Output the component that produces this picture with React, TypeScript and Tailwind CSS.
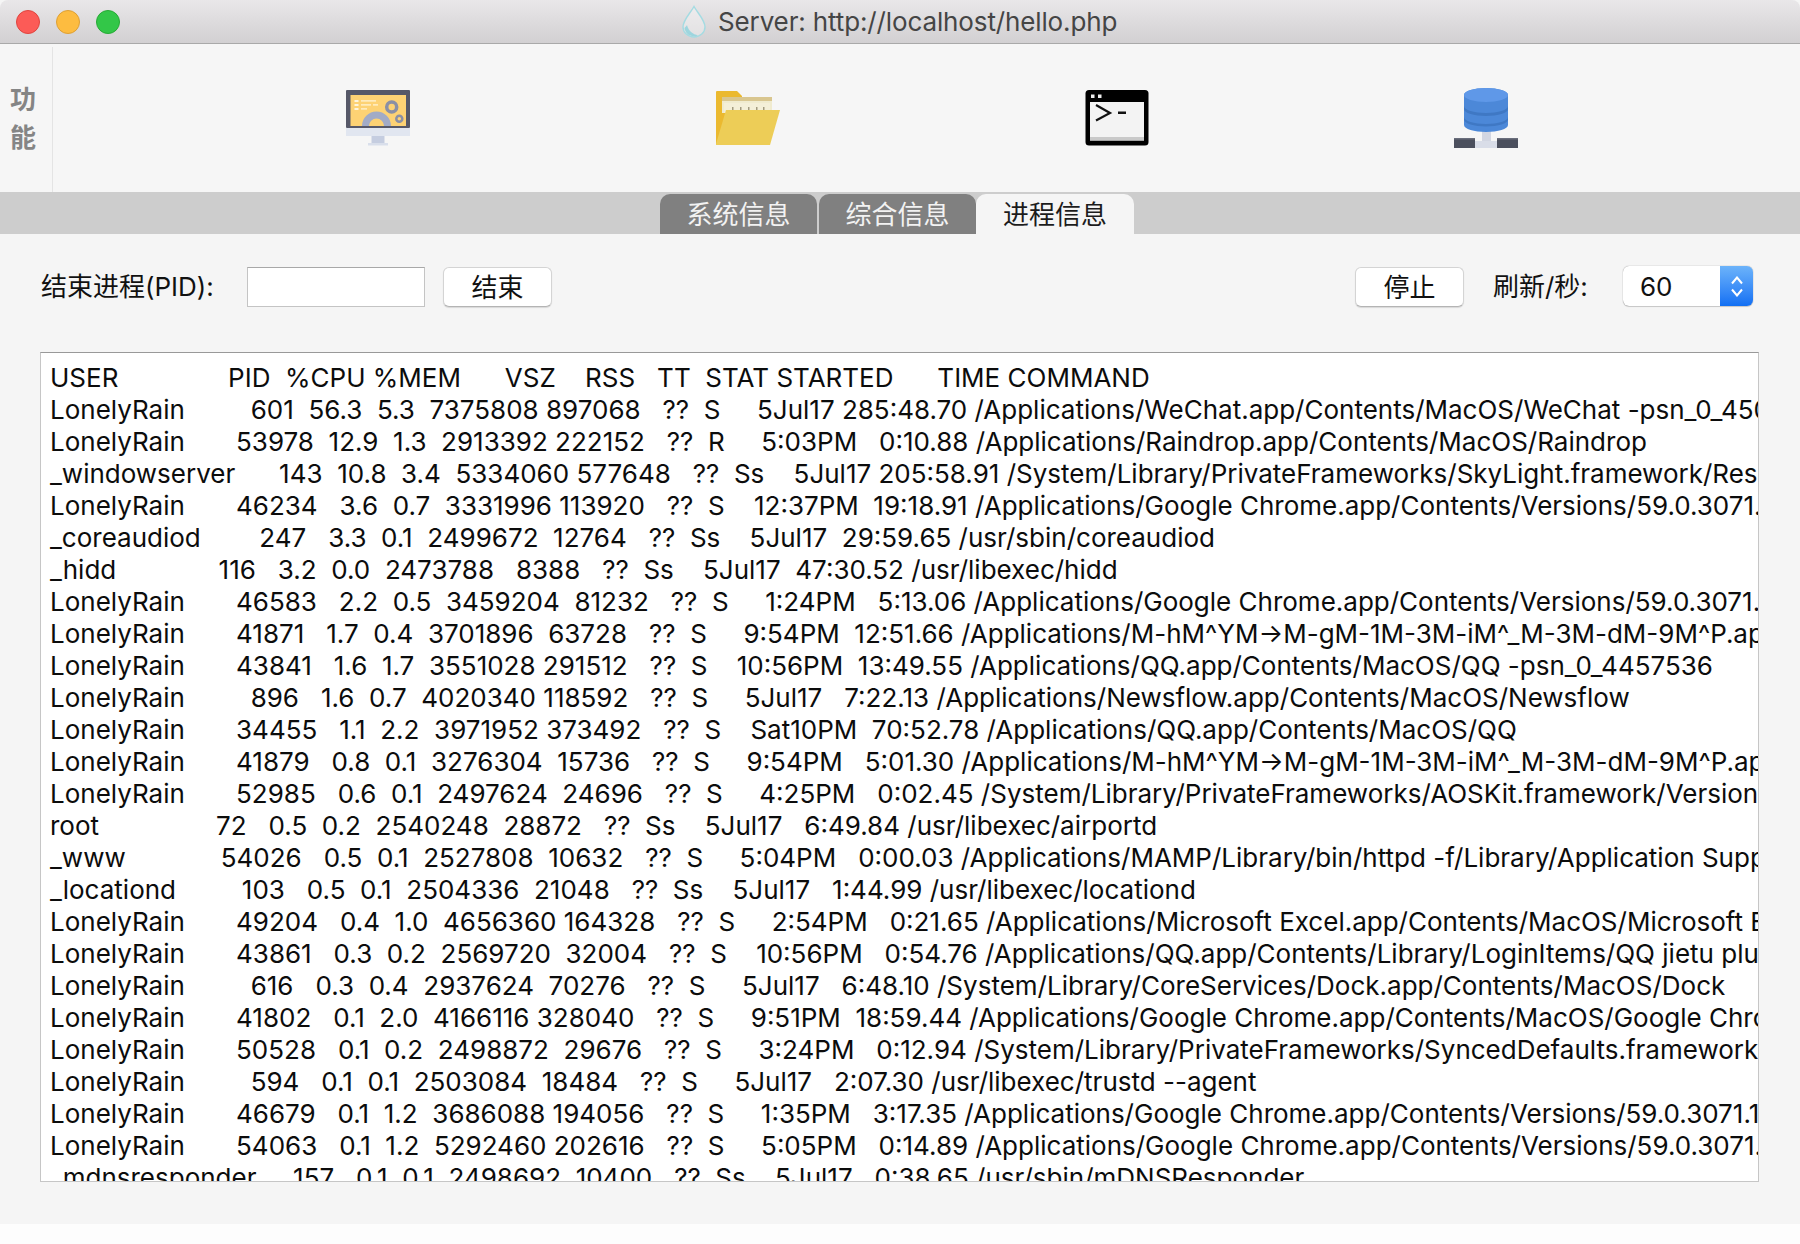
import React from 'react';

const chrome = '/Applications/Google Chrome.app/Contents/Versions/59.0.3071.115/Google Chrome Helper.app/Contents/MacOS/Google Chrome Helper --type=renderer';
const raindrop = '/Applications/M-hM^YM->M-gM-1M-3M-iM^_M-3M-dM-9M^P.app/Contents/MacOS/helper';

const procs = [
  ['LonelyRain', '601', '56.3', '5.3', '7375808', '897068', 'S', '5Jul17', '285:48.70', '/Applications/WeChat.app/Contents/MacOS/WeChat -psn_0_4501120'],
  ['LonelyRain', '53978', '12.9', '1.3', '2913392', '222152', 'R', '5:03PM', '0:10.88', '/Applications/Raindrop.app/Contents/MacOS/Raindrop'],
  ['_windowserver', '143', '10.8', '3.4', '5334060', '577648', 'Ss', '5Jul17', '205:58.91', '/System/Library/PrivateFrameworks/SkyLight.framework/Resources/WindowServer -daemon'],
  ['LonelyRain', '46234', '3.6', '0.7', '3331996', '113920', 'S', '12:37PM', '19:18.91', chrome],
  ['_coreaudiod', '247', '3.3', '0.1', '2499672', '12764', 'Ss', '5Jul17', '29:59.65', '/usr/sbin/coreaudiod'],
  ['_hidd', '116', '3.2', '0.0', '2473788', '8388', 'Ss', '5Jul17', '47:30.52', '/usr/libexec/hidd'],
  ['LonelyRain', '46583', '2.2', '0.5', '3459204', '81232', 'S', '1:24PM', '5:13.06', chrome],
  ['LonelyRain', '41871', '1.7', '0.4', '3701896', '63728', 'S', '9:54PM', '12:51.66', raindrop],
  ['LonelyRain', '43841', '1.6', '1.7', '3551028', '291512', 'S', '10:56PM', '13:49.55', '/Applications/QQ.app/Contents/MacOS/QQ -psn_0_4457536'],
  ['LonelyRain', '896', '1.6', '0.7', '4020340', '118592', 'S', '5Jul17', '7:22.13', '/Applications/Newsflow.app/Contents/MacOS/Newsflow'],
  ['LonelyRain', '34455', '1.1', '2.2', '3971952', '373492', 'S', 'Sat10PM', '70:52.78', '/Applications/QQ.app/Contents/MacOS/QQ'],
  ['LonelyRain', '41879', '0.8', '0.1', '3276304', '15736', 'S', '9:54PM', '5:01.30', raindrop],
  ['LonelyRain', '52985', '0.6', '0.1', '2497624', '24696', 'S', '4:25PM', '0:02.45', '/System/Library/PrivateFrameworks/AOSKit.framework/Versions/A/Helpers/AOSHeartbeat'],
  ['root', '72', '0.5', '0.2', '2540248', '28872', 'Ss', '5Jul17', '6:49.84', '/usr/libexec/airportd'],
  ['_www', '54026', '0.5', '0.1', '2527808', '10632', 'S', '5:04PM', '0:00.03', '/Applications/MAMP/Library/bin/httpd -f/Library/Application Support/appsolute/MAMP'],
  ['_locationd', '103', '0.5', '0.1', '2504336', '21048', 'Ss', '5Jul17', '1:44.99', '/usr/libexec/locationd'],
  ['LonelyRain', '49204', '0.4', '1.0', '4656360', '164328', 'S', '2:54PM', '0:21.65', '/Applications/Microsoft Excel.app/Contents/MacOS/Microsoft Excel'],
  ['LonelyRain', '43861', '0.3', '0.2', '2569720', '32004', 'S', '10:56PM', '0:54.76', '/Applications/QQ.app/Contents/Library/LoginItems/QQ jietu plugin.app'],
  ['LonelyRain', '616', '0.3', '0.4', '2937624', '70276', 'S', '5Jul17', '6:48.10', '/System/Library/CoreServices/Dock.app/Contents/MacOS/Dock'],
  ['LonelyRain', '41802', '0.1', '2.0', '4166116', '328040', 'S', '9:51PM', '18:59.44', '/Applications/Google Chrome.app/Contents/MacOS/Google Chrome'],
  ['LonelyRain', '50528', '0.1', '0.2', '2498872', '29676', 'S', '3:24PM', '0:12.94', '/System/Library/PrivateFrameworks/SyncedDefaults.framework/Support/syncdefaultsd'],
  ['LonelyRain', '594', '0.1', '0.1', '2503084', '18484', 'S', '5Jul17', '2:07.30', '/usr/libexec/trustd --agent'],
  ['LonelyRain', '46679', '0.1', '1.2', '3686088', '194056', 'S', '1:35PM', '3:17.35', chrome],
  ['LonelyRain', '54063', '0.1', '1.2', '5292460', '202616', 'S', '5:05PM', '0:14.89', chrome],
  ['_mdnsresponder', '157', '0.1', '0.1', '2498692', '10400', 'Ss', '5Jul17', '0:38.65', '/usr/sbin/mDNSResponder'],
];

// same column widths as `ps aux`
const psLine = (p: string[]) =>
  `${p[0].padEnd(16)} ${p[1].padStart(5)}  ${p[2].padStart(4)} ${p[3].padStart(4)} ${p[4].padStart(8)} ${p[5].padStart(6)}   ??  ${p[6].padEnd(4)} ${p[7].padStart(7)} ${p[8].padStart(9)} ${p[9]}`;

const header = 'USER               PID  %CPU %MEM      VSZ    RSS   TT  STAT STARTED      TIME COMMAND';

const MonitorIcon = () => (
  <svg width="64" height="56" viewBox="0 0 64 56">
    <rect x="0" y="0" width="64" height="38" rx="1" fill="#565868" />
    <rect x="0" y="38" width="64" height="8" fill="#e1e6f0" />
    <rect x="25.5" y="46" width="13" height="7" fill="#c5cde0" />
    <rect x="22" y="53" width="20" height="2.5" fill="#d9dfeb" />
    <rect x="4.5" y="5" width="55.5" height="31" fill="#fdd274" />
    <path d="M16 36a14.5 14.5 0 0 1 29 0h-7a7.5 7.5 0 0 0-15 0z" fill="#a2abc6" />
    <circle cx="45.7" cy="17" r="5" fill="none" stroke="#8a8fa5" strokeWidth="3.5" />
    <circle cx="53.3" cy="28.7" r="3" fill="none" stroke="#8a8fa5" strokeWidth="2.5" />
    <g fill="#fff5dc">
      <rect x="8.5" y="10" width="4" height="2" />
      <rect x="15" y="10.3" width="15" height="1.2" />
      <rect x="8.5" y="14" width="4" height="2" />
      <rect x="15" y="14.3" width="10" height="1.2" />
      <rect x="27" y="14.3" width="5" height="1.2" />
      <rect x="8.5" y="18" width="4" height="2" />
      <rect x="15" y="18.3" width="6" height="1.2" />
    </g>
  </svg>
);

const FolderIcon = () => (
  <svg width="64" height="54" viewBox="0 0 64 54">
    <path d="M0 1a1 1 0 0 1 1-1h20l5 5v49H0z" fill="#ebb92f" />
    <rect x="6" y="6" width="50" height="6" fill="#d9c68f" />
    <rect x="6" y="10" width="50" height="12" fill="#f0ebcf" />
    <rect x="8" y="12" width="46" height="10" fill="#f4efd8" />
    <g fill="#a39b80">
      <rect x="16" y="16" width="1.5" height="3" />
      <rect x="24" y="16" width="1.5" height="3" />
      <rect x="32" y="16" width="1.5" height="3" />
      <rect x="40" y="16" width="1.5" height="3" />
      <rect x="47" y="16" width="1.5" height="3" />
    </g>
    <path d="M10 19h54l-10 35H0v-1z" fill="#edcd57" />
  </svg>
);

const TerminalIcon = () => (
  <svg width="64" height="56" viewBox="0 0 64 56">
    <rect x="0.5" y="0" width="63" height="55.5" rx="3.5" fill="#000" />
    <rect x="5" y="12" width="54" height="38.5" fill="#f3f3f3" />
    <rect x="5" y="47" width="54" height="3.5" fill="#c9c9c9" />
    <rect x="6" y="4.5" width="3.5" height="3.5" fill="#eee" />
    <rect x="13" y="4.5" width="3.5" height="3.5" fill="#eee" />
    <path d="M11 15l14 8-14 7.5" fill="none" stroke="#111" strokeWidth="2.2" />
    <rect x="33" y="21.5" width="8" height="2.5" fill="#111" />
  </svg>
);

const DatabaseIcon = () => (
  <svg width="64" height="60" viewBox="0 0 64 60">
    <rect x="28" y="40" width="9" height="14" fill="#d2d6e2" />
    <rect x="21" y="53" width="22" height="7" fill="#d9dde8" />
    <rect x="0" y="50" width="21" height="10" fill="#4b4f5d" />
    <rect x="43" y="50" width="21" height="10" fill="#4b4f5d" />
    <rect x="0" y="50" width="21" height="1.5" fill="#6a6e7c" />
    <rect x="43" y="50" width="21" height="1.5" fill="#6a6e7c" />
    <path d="M10 7c0-4 10-7 22-7s22 3 22 7v30c0 4-10 7-22 7s-22-3-22-7z" fill="#4c88d8" />
    <ellipse cx="32" cy="7" rx="22" ry="7" fill="#5f98e8" />
    <path d="M10 18c0 4 10 7 22 7s22-3 22-7v3c0 4-10 7-22 7s-22-3-22-7zM10 29c0 4 10 7 22 7s22-3 22-7v2.500c0 4-10 7-22 7s-22-3-22-7z" fill="#3f78c4" />
  </svg>
);

const DropIcon = () => (
  <svg width="26" height="33" viewBox="0 0 26 33">
    <path d="M13 1.500C9.500 8 2 15 2 22a11 10 0 0 0 22 0C24 15 16.500 8 13 1.500z" fill="#fbfbfb" fillOpacity="0.35" stroke="#a4dbe2" strokeWidth="1.400" />
    <path d="M3.500 23c.5 4 4 8.300 9.500 8.300 1.500 0 3-.3 4-1-5-1-9-3.500-11-10z" fill="#7fd0dc" fillOpacity="0.7" />
  </svg>
);

const Tab = ({ label, active }: { label: string; active?: boolean }) => (
  <div
    className={
      active
        ? 'w-[158px] h-10 rounded-t-[10px] bg-[#f5f5f5] text-[#1c1c1c] flex items-center justify-center'
        : 'w-[157px] h-10 rounded-t-[10px] bg-[#808080] text-[#f2f2f2] flex items-center justify-center'
    }
  >
    {label}
  </div>
);

const Btn = ({ label }: { label: string }) => (
  <button className="w-[109px] h-10 pb-[2px] bg-white rounded-md border border-[#d4d4d4] border-b-[#b4b4b4] shadow-[0_1px_1px_rgba(0,0,0,0.12)] text-[#111]">
    {label}
  </button>
);

export default function App() {
  return (
    <div
      className="w-full h-[1244px] bg-[#fdfdfd] text-[26px] overflow-hidden"
      style={{ fontFamily: 'Inter, "Noto Sans CJK SC", sans-serif' }}
    >
      <div className="h-[1224px] bg-[#f5f5f5] flex flex-col">
        {/* title bar */}
        <div className="relative h-11 shrink-0 rounded-t-lg bg-gradient-to-b from-[#e9e7e9] to-[#d2d0d2] border-b border-[#a9a9a9] flex items-center">
          <div className="flex items-center gap-4 pl-4">
            <div className="w-6 h-6 rounded-full bg-[#fc5b57] border border-[#e0443e]" />
            <div className="w-6 h-6 rounded-full bg-[#fdbc40] border border-[#dea034]" />
            <div className="w-6 h-6 rounded-full bg-[#33c748] border border-[#27aa35]" />
          </div>
          <div className="flex items-center pl-[561px] gap-[11px] text-[#454545] leading-none tracking-[-0.005em]">
            <DropIcon />
            <span>Server: http://localhost/hello.php</span>
          </div>
        </div>

        {/* toolbar */}
        <div className="h-[148px] shrink-0 flex bg-[#f6f6f6]">
          <div className="w-[53px] mt-[3px] border-r border-[#e4e4e4] flex flex-col items-start justify-center pl-[10px] pb-[2px] text-[#858585] font-bold leading-[38px]">
            <span>功</span>
            <span>能</span>
          </div>
          <div className="flex items-center pl-[140px]">
            <div className="w-[370px] flex justify-center"><MonitorIcon /></div>
            <div className="w-[370px] flex justify-center"><FolderIcon /></div>
            <div className="w-[367px] flex justify-center"><TerminalIcon /></div>
            <div className="w-[371px] flex justify-center"><DatabaseIcon /></div>
          </div>
        </div>

        {/* tabs */}
        <div className="h-[42px] shrink-0 bg-[#cdcdcd] flex items-end pl-[660px] gap-[2px]">
          <Tab label="系统信息" />
          <Tab label="综合信息" />
          <div className="-ml-[2px]">
            <Tab label="进程信息" active />
          </div>
        </div>

        {/* controls */}
        <div className="h-[118px] shrink-0 flex items-start pt-[33px] pl-[41px] pr-[47px] text-[#111]">
          <span className="w-[206px] h-10 pb-[2px] flex items-center">结束进程(PID):</span>
          <div className="w-[178px] h-10 bg-white border border-[#c4c4c4] border-t-[#a8a8a8]" />
          <div className="ml-[18px]">
            <Btn label="结束" />
          </div>
          <div className="ml-auto">
            <Btn label="停止" />
          </div>
          <span className="ml-[29px] w-[130px] h-10 pb-[2px] flex items-center">刷新/秒:</span>
          <div className="w-[130px] h-10 -mt-px bg-white rounded-md shadow-[0_0_1px_rgba(0,0,0,0.5),0_1px_1px_rgba(0,0,0,0.15)] flex overflow-hidden">
            <span className="flex-1 pl-[17px] flex items-center">60</span>
            <div className="w-[33px] bg-gradient-to-b from-[#6cb3fa] to-[#106ff3] flex flex-col items-center justify-center gap-[3px]">
              <svg width="14" height="9" viewBox="0 0 14 9">
                <path d="M2 7.500l5-6 5 6" fill="none" stroke="#fff" strokeWidth="2" />
              </svg>
              <svg width="14" height="9" viewBox="0 0 14 9">
                <path d="M2 1.500l5 6 5-6" fill="none" stroke="#fff" strokeWidth="2" />
              </svg>
            </div>
          </div>
        </div>

        {/* ps output */}
        <div className="ml-10 w-[1719px] h-[830px] shrink-0 bg-white border border-[#c6c6c6] border-t-[#999] overflow-hidden pl-[9px] pt-[9px] text-[#0c0c0c] leading-8 whitespace-pre">
          <div>{header}</div>
          {procs.map((p, i) => (
            <div key={i}>{psLine(p)}</div>
          ))}
        </div>
      </div>
    </div>
  );
}
